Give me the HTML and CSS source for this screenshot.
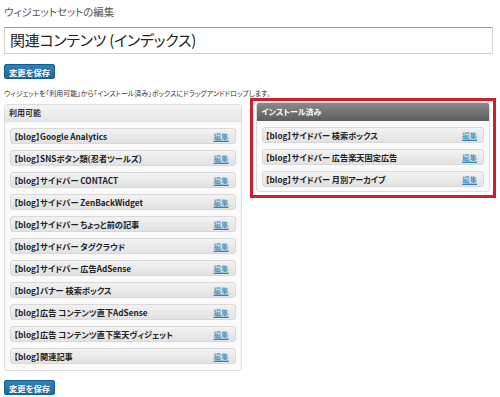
FILE: index.html
```html
<!DOCTYPE html>
<html lang="ja">
<head>
  <meta charset="UTF-8" />
  <title>ウィジェットセットの編集</title>
  <link rel="stylesheet" href="styles.css">
</head>
<body>
  <div class="wrap">
    <h1 class="page-title">ウィジェットセットの編集</h1>
    <div class="set-name">関連コンテンツ (インデックス)</div>
    <button type="button" class="btn-save">変更を保存</button>
    <p class="hint">ウィジェットを「利用可能」から「インストール済み」ボックスにドラッグアンドドロップします。</p>

    <div class="columns">
      <!-- available widgets -->
      <div class="panel available">
        <div class="panel-head">利用可能</div>
        <ul class="widget-list">
          <li class="widget"><span>【blog】Google Analytics</span><a href="#">編集</a></li>
          <li class="widget"><span>【blog】SNSボタン類(忍者ツールズ)</span><a href="#">編集</a></li>
          <li class="widget"><span>【blog】サイドバー CONTACT</span><a href="#">編集</a></li>
          <li class="widget"><span>【blog】サイドバー ZenBackWidget</span><a href="#">編集</a></li>
          <li class="widget"><span>【blog】サイドバー ちょっと前の記事</span><a href="#">編集</a></li>
          <li class="widget"><span>【blog】サイドバー タグクラウド</span><a href="#">編集</a></li>
          <li class="widget"><span>【blog】サイドバー 広告AdSense</span><a href="#">編集</a></li>
          <li class="widget"><span>【blog】バナー 検索ボックス</span><a href="#">編集</a></li>
          <li class="widget"><span>【blog】広告 コンテンツ直下AdSense</span><a href="#">編集</a></li>
          <li class="widget"><span>【blog】広告 コンテンツ直下楽天ヴィジェット</span><a href="#">編集</a></li>
          <li class="widget"><span>【blog】関連記事</span><a href="#">編集</a></li>
        </ul>
      </div>

      <!-- installed widgets (highlighted) -->
      <div class="installed-frame">
        <div class="panel installed">
          <div class="panel-head">インストール済み</div>
          <ul class="widget-list">
            <li class="widget"><span>【blog】サイドバー 検索ボックス</span><a href="#">編集</a></li>
            <li class="widget"><span>【blog】サイドバー 広告楽天固定広告</span><a href="#">編集</a></li>
            <li class="widget"><span>【blog】サイドバー 月別アーカイブ</span><a href="#">編集</a></li>
          </ul>
        </div>
      </div>
    </div>

    <button type="button" class="btn-save bottom">変更を保存</button>
  </div>
</body>
</html>
```

FILE: styles.css
```css
/* Base styles */
body {
  margin: 0;
  padding: 0;
  background: #fff;
  font-family: "Noto Sans CJK JP", "Noto Sans", sans-serif;
  font-feature-settings: "palt"; /* proportional kana, closer to the original */
  color: #333;
}
.wrap {
  padding: 4px;
}
.page-title {
  margin: 0;
  font-size: 10.5px;
  line-height: 16px;
  font-weight: normal;
  color: #555;
}
/* Widget set name field */
.set-name {
  margin-top: 7px;
  width: 489px;
  height: 27px;
  box-sizing: border-box;
  padding: 0 5px;
  border: 1px solid #d2d2d2;
  border-top-color: #9a9a9a;
  font-size: 15px;
  letter-spacing: -0.3px;
  line-height: 24px;
  color: #222;
}
.btn-save {
  display: block;
  margin-top: 10px;
  height: 15px;
  padding: 0 4px;
  border: 1px solid #175c8c;
  border-radius: 2px;
  background: linear-gradient(#2b82c0, #1c6aa3);
  color: #fff;
  font-family: inherit;
  font-feature-settings: "palt";
  font-size: 8.3px;
  font-weight: bold;
  line-height: 12px;
}
.btn-save.bottom {
  margin-top: 9px;
}
.hint {
  margin: 9px 0 0;
  font-size: 7px;
  line-height: 10px;
  color: #333;
}
/* Two columns */
.columns {
  display: flex;
  align-items: flex-start;
}
.panel {
  border: 1px solid #dcdcdc;
  border-radius: 3px;
  background: #fafafa;
}
.available {
  width: 238px;
  box-sizing: border-box;
  margin-top: 6px;
}
.panel-head {
  height: 16px;
  padding-left: 4px;
  background: linear-gradient(#f4f4f4, #e6e6e6);
  border-bottom: 1px solid #e0e0e0;
  font-size: 8px;
  font-weight: bold;
  line-height: 16px;
  color: #333;
}
.widget-list {
  list-style: none;
  margin: 0;
  padding: 6px 5px;
}
.widget {
  display: flex;
  justify-content: space-between;
  align-items: center;
  height: 16px;
  box-sizing: border-box;
  margin-bottom: 6px;
  padding: 0 6px 0 3px;
  border: 1px solid #d8d8d8;
  border-radius: 3px;
  background: linear-gradient(#f2f2f2, #e2e2e2);
  font-size: 8.2px;
  font-weight: bold;
  color: #222;
}
.widget:last-child {
  margin-bottom: 0;
}
.widget a {
  font-size: 7.5px;
  font-weight: normal;
  color: #2a86b8;
}
/* Red highlight around installed widgets */
.installed-frame {
  margin-left: 8px;
  width: 247px;
  box-sizing: border-box;
  padding: 1px 3px 3px;
  border: 3px solid #cc1f2d;
}
.installed .panel-head {
  height: 18px;
  line-height: 18px;
  padding-left: 5px;
  background: linear-gradient(#8a8a8a, #5c5c5c);
  border-bottom: none;
  border-radius: 2px 2px 0 0;
  color: #fff;
}
.installed .widget-list {
  padding-bottom: 4px;
}
```
